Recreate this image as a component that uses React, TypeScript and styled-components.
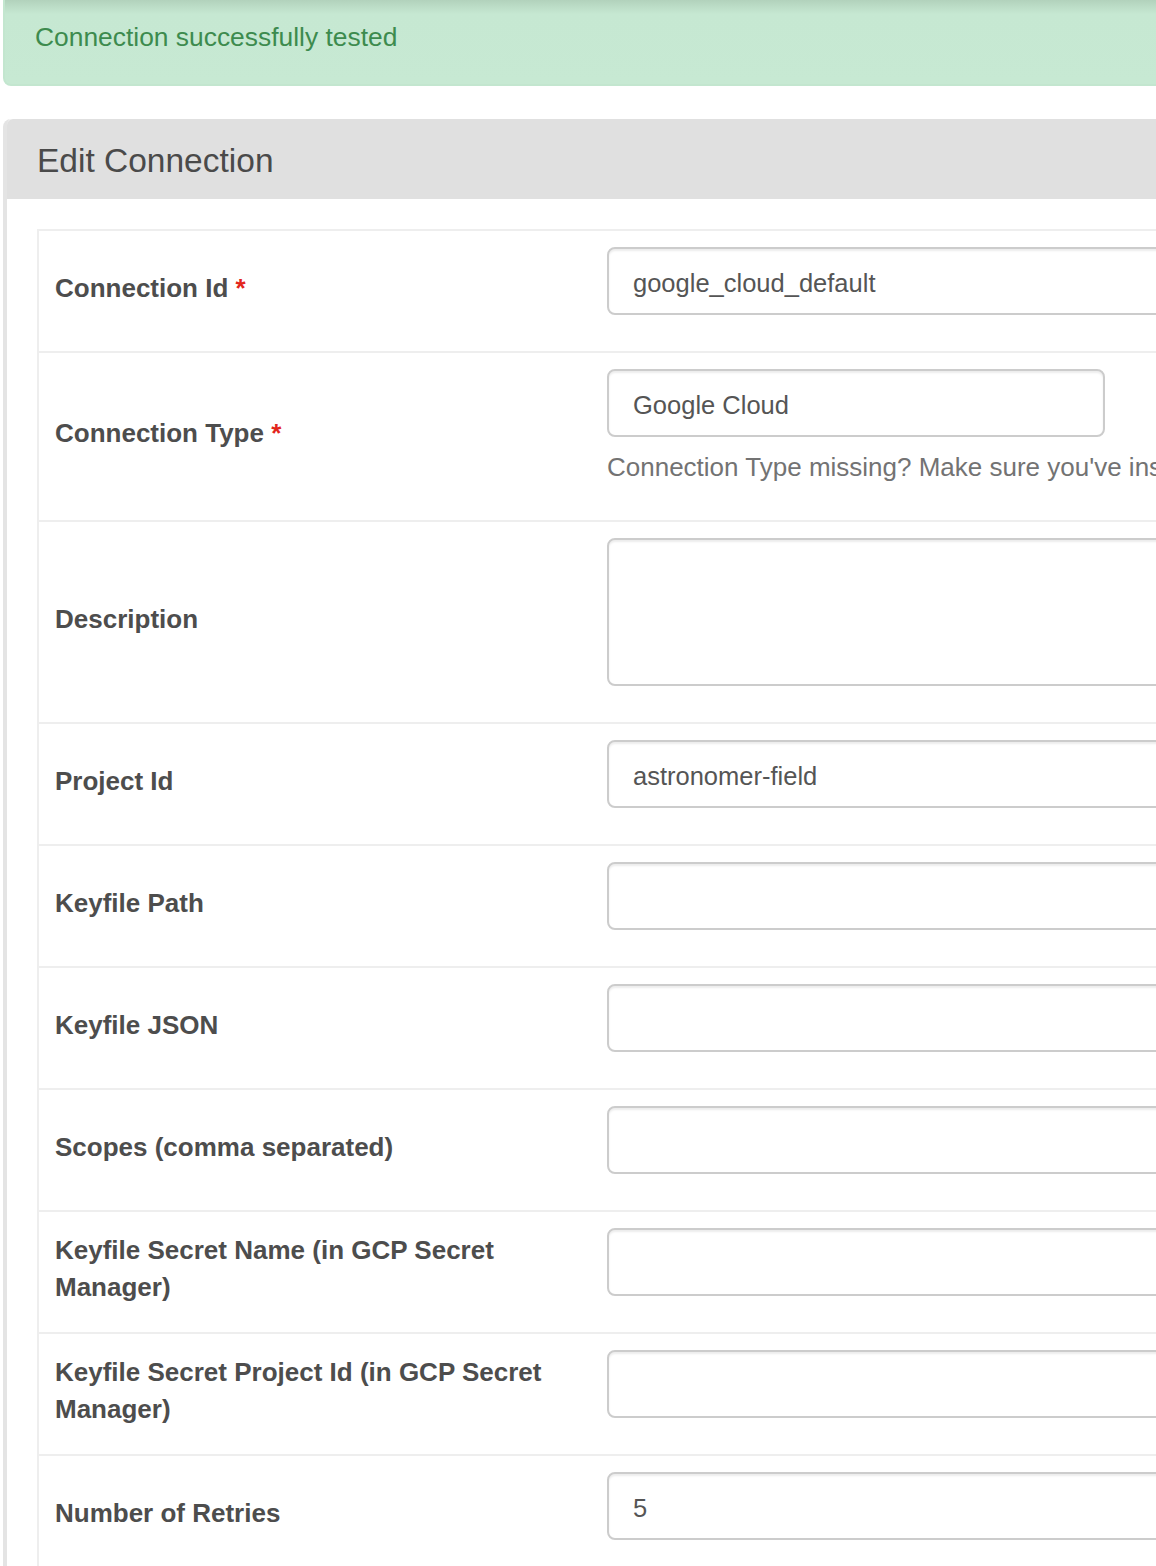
import React from 'react';
import styled, { createGlobalStyle } from 'styled-components';

const GlobalStyle = createGlobalStyle`
  html, body {
    margin: 0;
    padding: 0;
    overflow: hidden;
    background: #fff;
    font-family: "Liberation Sans", Arial, Helvetica, sans-serif;
  }
`;

const Page = styled.div`
  width: 1500px;
  padding-left: 3px;
`;

const Alert = styled.div`
  padding: 19px 30px 28px;
  border: 2px solid #c3e6cf;
  border-top: 0;
  border-radius: 0 0 8px 8px;
  background: linear-gradient(to bottom, #b2d2bc 0, #c6e8d2 14px, #c7e9d3 100%);
  color: #3d8b4e;
  font-size: 26.4px;
  line-height: 37px;
  margin-bottom: 33px;
`;

const Panel = styled.div`
  border-left: 4px solid #e4e4e4;
  border-top-left-radius: 8px;
  background: #fff;
`;

const PanelHeading = styled.div`
  background: #e0e0e0;
  border-top-left-radius: 6px;
  padding: 24px 30px 20px;
  font-size: 33.5px;
  line-height: 36px;
  color: #4a4a4a;
`;

const PanelBody = styled.div`
  padding: 30px;
`;

const FormTable = styled.div`
  border-left: 2px solid #eee;
`;

const Row = styled.div`
  display: grid;
  grid-template-columns: 552px 1fr;
  border-top: 2px solid #eee;
`;

const LabelCell = styled.div`
  padding: 16px;
  display: flex;
  align-items: center;
`;

const Label = styled.label`
  display: block;
  margin-bottom: 6px;
  font-size: 26px;
  line-height: 37px;
  font-weight: 700;
  color: #4d4d4d;
`;

const Required = styled.span`
  color: #e3261c;
`;

const FieldCell = styled.div`
  padding: 16px 16px 36px;
`;

const controlStyles = `
  display: block;
  box-sizing: border-box;
  border: 2px solid #ccc;
  border-radius: 8px;
  box-shadow: inset 0 2px 2px rgba(0, 0, 0, 0.075);
  background: #fff;
  font-family: "Liberation Sans", Arial, Helvetica, sans-serif;
  font-size: 25.5px;
  line-height: 37px;
  color: #555;
  padding: 14px 24px 10px;
  margin: 0;
  outline: none;
`;

const TextInput = styled.input<{ $width?: number }>`
  ${controlStyles}
  height: 68px;
  width: ${({ $width }) => ($width ? `${$width}px` : '100%')};
`;

const TextArea = styled.textarea`
  ${controlStyles}
  height: 148px;
  width: 100%;
  resize: none;
`;

const HelpBlock = styled.div`
  margin-top: 12px;
  margin-bottom: -2px;
  font-size: 26px;
  line-height: 37px;
  color: #737373;
  white-space: nowrap;
`;

type Field = {
  label: string;
  required?: boolean;
  kind?: 'input' | 'select' | 'textarea';
  value?: string;
  help?: string;
};

const fields: Field[] = [
  { label: 'Connection Id', required: true, value: 'google_cloud_default' },
  {
    label: 'Connection Type',
    required: true,
    kind: 'select',
    value: 'Google Cloud',
    help: "Connection Type missing? Make sure you've installed the corresponding Airflow Provider Package.",
  },
  { label: 'Description', kind: 'textarea' },
  { label: 'Project Id', value: 'astronomer-field' },
  { label: 'Keyfile Path' },
  { label: 'Keyfile JSON' },
  { label: 'Scopes (comma separated)' },
  { label: 'Keyfile Secret Name (in GCP Secret Manager)' },
  { label: 'Keyfile Secret Project Id (in GCP Secret Manager)' },
  { label: 'Number of Retries', value: '5' },
];

const FieldControl = ({ field }: { field: Field }) => {
  if (field.kind === 'textarea') return <TextArea readOnly value={field.value ?? ''} />;
  if (field.kind === 'select')
    return <TextInput readOnly $width={498} value={field.value ?? ''} />;
  return <TextInput readOnly value={field.value ?? ''} />;
};

export default function App() {
  return (
    <Page>
      <GlobalStyle />
      <Alert>Connection successfully tested</Alert>
      <Panel>
        <PanelHeading>Edit Connection</PanelHeading>
        <PanelBody>
          <FormTable>
            {fields.map((field) => (
              <Row key={field.label}>
                <LabelCell>
                  <Label>
                    {field.label}
                    {field.required && <Required> *</Required>}
                  </Label>
                </LabelCell>
                <FieldCell>
                  <FieldControl field={field} />
                  {field.help && <HelpBlock>{field.help}</HelpBlock>}
                </FieldCell>
              </Row>
            ))}
          </FormTable>
        </PanelBody>
      </Panel>
    </Page>
  );
}
